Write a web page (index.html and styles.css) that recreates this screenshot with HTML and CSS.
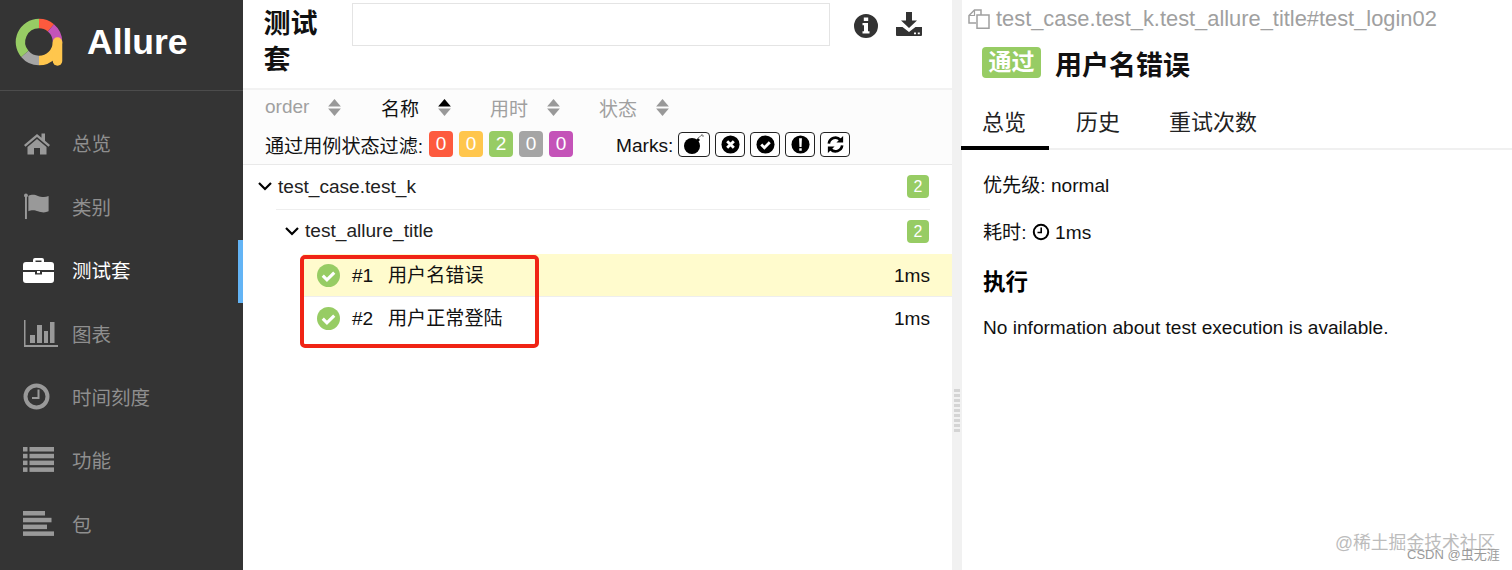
FILE: index.html
```html
<!DOCTYPE html>
<html lang="zh">
<head>
<meta charset="utf-8">
<title>Allure</title>
<link rel="stylesheet" href="styles.css">
</head>
<body>
<div class="app">
  <aside class="side">
    <div class="brand">
      <svg class="logo" viewBox="0 0 50 50">
        <g fill="none" stroke-width="9.500">
          <path stroke="#fd5a3e" d="M24 5.500A18.500 18.500 0 0 1 35.900 9.800"/>
          <path stroke="#c453b8" d="M35.900 9.800A18.500 18.500 0 0 1 42.500 24"/>
          <path stroke="#ffc64d" d="M42.500 24A18.500 18.500 0 0 1 24 42.500"/>
          <path stroke="#a5a5a5" d="M24 42.500A18.500 18.500 0 0 1 9.800 35.900"/>
          <path stroke="#97cc64" d="M9.800 35.900A18.500 18.500 0 0 1 24 5.500"/>
          <path stroke="#ffc64d" stroke-linecap="round" d="M42.500 24V43"/>
        </g>
      </svg>
      <span class="brand-name">Allure</span>
    </div>
    <nav class="nav">
      <a class="nav-item"><span class="nav-ico"><svg width="28" height="24" viewBox="0 0 28 24"><path d="M14 3 1 14l1.500 1.800L14 6l11.500 9.800L27 14l-5-4.300V2.500h-3.500v4.200z"/><path d="M14 8 4.500 16v7.500H11V17h6v6.500h6.500V16z"/></svg></span>总览</a>
      <a class="nav-item"><span class="nav-ico"><svg width="30" height="27" viewBox="0 0 30 28"><circle cx="2.500" cy="2.500" r="2"/><rect x="1.500" y="3" width="2" height="24"/><path d="M5 3c4-2 7-1 10 0s7 2 11 0v16c-4 2-8 1-11 0s-6-2-10 0z" /></svg></span>类别</a>
      <a class="nav-item active"><span class="nav-ico"><svg width="31" height="26" viewBox="0 0 31 26"><path d="M10 5V3a2 2 0 0 1 2-2h7a2 2 0 0 1 2 2v2h7a3 3 0 0 1 3 3v5H0V8a3 3 0 0 1 3-3zm2.500 0h6V3.500h-6z"/><path d="M0 15h12v2.500h7V15h12v8a3 3 0 0 1-3 3H3a3 3 0 0 1-3-3z"/><rect x="14" y="14" width="3" height="2.200"/></svg></span>测试套</a>
      <a class="nav-item"><span class="nav-ico"><svg width="35" height="27" viewBox="0 0 35 27"><path d="M1 0h1.500v25H35v2H1z"/><rect x="7" y="15" width="5" height="8"/><rect x="14" y="5" width="5" height="18"/><rect x="21" y="11" width="4" height="12"/><rect x="27" y="2" width="4.500" height="21"/></svg></span>图表</a>
      <a class="nav-item"><span class="nav-ico"><svg width="28" height="28" viewBox="0 0 28 28"><circle cx="13.500" cy="13.500" r="11" fill="none" stroke="#999" stroke-width="4"/><path d="M14.500 6.500h2v9.500H9v-2h5.500z"/></svg></span>时间刻度</a>
      <a class="nav-item"><span class="nav-ico"><svg width="31" height="25" viewBox="0 0 31 25"><rect y="0" width="4.500" height="4.500"/><rect x="6.500" y="0" width="24.500" height="4.500"/><rect y="6.800" width="4.500" height="4.500"/><rect x="6.500" y="6.800" width="24.500" height="4.500"/><rect y="13.600" width="4.500" height="4.500"/><rect x="6.500" y="13.600" width="24.500" height="4.500"/><rect y="20.400" width="4.500" height="4.500"/><rect x="6.500" y="20.400" width="24.500" height="4.500"/></svg></span>功能</a>
      <a class="nav-item"><span class="nav-ico"><svg width="31" height="25" viewBox="0 0 31 25"><rect y="0" width="22" height="4.500"/><rect y="6.800" width="28.500" height="4.500"/><rect y="13.600" width="24" height="4.500"/><rect y="20.400" width="31" height="4.500"/></svg></span>包</a>
    </nav>
  </aside>

  <main class="list">
    <header class="list-head">
      <h1 class="list-title">测试套</h1>
      <input class="search" type="text" aria-label="search">
      <div class="tools">
        <svg class="tool-info" viewBox="0 0 24 24"><path fill-rule="evenodd" d="M12 0a12 12 0 1 1 0 24 12 12 0 0 1 0-24zM9.800 3.500v3.500h4.400V3.500zM8.500 9v2.200h1.500v6H8.500v2.300h7v-2.300H14V9z"/></svg>
        <svg class="tool-down" viewBox="0 0 26 24"><path d="M10 0h6v8.500h5L13 16 5 8.500h5z"/><path fill-rule="evenodd" d="M0 15h6.500L13 20l6.500-5H26v8a1 1 0 0 1-1 1H1a1 1 0 0 1-1-1zm18 5.500v1.700h2v-1.700zm3.800 0v1.700h2v-1.700z"/></svg>
      </div>
    </header>
    <div class="sorters">
      <span class="sorter s-order">order<svg class="arrows" viewBox="0 0 12 16"><path d="M6 0l6 7H0z"/><path d="M0 9h12l-6 7z"/></svg></span>
      <span class="sorter s-name on">名称<svg class="arrows" viewBox="0 0 12 16"><path class="up" d="M6 0l6 7H0z"/><path d="M0 9h12l-6 7z"/></svg></span>
      <span class="sorter s-time">用时<svg class="arrows" viewBox="0 0 12 16"><path d="M6 0l6 7H0z"/><path d="M0 9h12l-6 7z"/></svg></span>
      <span class="sorter s-stat">状态<svg class="arrows" viewBox="0 0 12 16"><path d="M6 0l6 7H0z"/><path d="M0 9h12l-6 7z"/></svg></span>
    </div>
    <div class="filters">
      <span class="filter-label">通过用例状态过滤:</span>
      <span class="chips">
        <span class="chip red">0</span><span class="chip yellow">0</span><span class="chip green">2</span><span class="chip gray">0</span><span class="chip purple">0</span>
      </span>
      <span class="marks-label">Marks:</span>
      <span class="marks">
        <span class="mark wide"><svg viewBox="0 0 24 20"><circle cx="10" cy="12" r="8"/><path d="M14 6l2-2 2 2-2 2z"/><path d="M16 4l4-3M19 1h2v2" fill="none" stroke="#777" stroke-width="1"/></svg></span>
        <span class="mark"><svg viewBox="0 0 20 20"><circle cx="10" cy="10" r="9.500"/><path d="M6.500 6.500l7 7M13.500 6.500l-7 7" stroke="#fff" stroke-width="3"/></svg></span>
        <span class="mark"><svg viewBox="0 0 20 20"><circle cx="10" cy="10" r="9.500"/><path d="M5.500 10l3.300 3.300 5.700-5.700" fill="none" stroke="#fff" stroke-width="3"/></svg></span>
        <span class="mark"><svg viewBox="0 0 20 20"><circle cx="10" cy="10" r="9.500"/><path d="M8.500 3.500h3l-.4 9H8.900zM8.700 14h2.600v2.600H8.700z" fill="#fff"/></svg></span>
        <span class="mark"><svg viewBox="0 0 20 20"><path d="M3 9a7 7 0 0 1 12-4" fill="none" stroke="#000" stroke-width="2.800"/><path d="M18 1v7h-7z"/><path d="M17 11a7 7 0 0 1-12 4" fill="none" stroke="#000" stroke-width="2.800"/><path d="M2 19v-7h7z"/></svg></span>
      </span>
    </div>
    <div class="tree">
      <div class="group">
        <svg class="chev" viewBox="0 0 14 9"><path d="M1 1l6 6 6-6" fill="none" stroke="#000" stroke-width="2.200"/></svg>
        <span class="group-name">test_case.test_k</span>
        <span class="count">2</span>
      </div>
      <div class="group sub">
        <svg class="chev" viewBox="0 0 14 9"><path d="M1 1l6 6 6-6" fill="none" stroke="#000" stroke-width="2.200"/></svg>
        <span class="group-name">test_allure_title</span>
        <span class="count">2</span>
      </div>
      <div class="case selected">
        <svg class="ok" viewBox="0 0 22 22"><circle cx="11" cy="11" r="11"/><path d="M5.500 11.200l4 4 7-7" fill="none" stroke="#fff" stroke-width="3"/></svg>
        <span class="case-num">#1</span><span class="case-name">用户名错误</span>
        <span class="case-time">1ms</span>
      </div>
      <div class="case">
        <svg class="ok" viewBox="0 0 22 22"><circle cx="11" cy="11" r="11"/><path d="M5.500 11.200l4 4 7-7" fill="none" stroke="#fff" stroke-width="3"/></svg>
        <span class="case-num">#2</span><span class="case-name">用户正常登陆</span>
        <span class="case-time">1ms</span>
      </div>
      <div class="redbox"></div>
    </div>
  </main>

  <div class="split"><span class="grip"></span></div>

  <section class="detail">
    <div class="path">
      <svg class="copy" viewBox="0 0 22 20"><path d="M8 14H1V6.500L6.500 1H13v5" fill="none" stroke="#a0a0a0" stroke-width="1.500"/><path d="M1 6.500h5.500V1" fill="none" stroke="#a0a0a0" stroke-width="1.200"/><path d="M9 6h12v13.200H9z" fill="none" stroke="#a0a0a0" stroke-width="1.500"/></svg>
      <span>test_case.test_k.test_allure_title#test_login02</span>
    </div>
    <div class="status-line">
      <span class="pass-tag">通过</span>
      <h2 class="case-title">用户名错误</h2>
    </div>
    <div class="tabs">
      <span class="tab current">总览</span>
      <span class="tab t2">历史</span>
      <span class="tab t3">重试次数</span>
    </div>
    <div class="body">
      <p class="meta">优先级: normal</p>
      <p class="meta">耗时: <svg class="clock" viewBox="0 0 18 18"><circle cx="9" cy="9" r="7.200" fill="none" stroke="#000" stroke-width="2"/><path d="M9.200 4.500v5H5.500" fill="none" stroke="#000" stroke-width="1.600"/></svg> 1ms</p>
      <h3 class="exec">执行</h3>
      <p class="meta last">No information about test execution is available.</p>
    </div>
  </section>
</div>
<div class="mark-juejin">@稀土掘金技术社区</div>
<div class="mark-csdn">CSDN @虫无涯</div>
</body>
</html>
```

FILE: styles.css
```css
* { box-sizing: border-box; }
html, body { margin: 0; height: 570px; overflow: hidden; }
body {
  position: relative;
  background: #fff;
  color: #111;
  font-family: "Liberation Sans", "Noto Sans CJK SC", sans-serif;
  font-size: 19.100px;
}
.app { display: flex; height: 570px; }

/* sidebar */
.side { flex: 0 0 243px; background: #343434; color: #999; }
.brand {
  display: flex; align-items: center; height: 91px;
  padding: 0 0 0 14.500px; border-bottom: 1px solid #4c4c4c;
}
.logo { width: 50px; height: 50px; margin-top: -5px; }
.brand-name { margin: -5px 0 0 22.500px; color: #fff; font-size: 35.500px; font-weight: 700; }
.nav { display: flex; flex-direction: column; padding-top: 22px; }
.nav-item {
  display: flex; align-items: center; height: 63.400px;
  padding: 0 0 3.500px 23px; font-size: 19.500px; color: #8f8f8f;
}
.nav-ico { flex: 0 0 49px; display: flex; align-items: center; }
.nav-ico svg { fill: #999; }
.nav-item.active { color: #fff; border-right: 5px solid #63b4f5; }
.nav-item.active svg { fill: #fff; }

/* list column */
.list { flex: 0 0 709px; display: flex; flex-direction: column; background: #fff; }
.list-head {
  display: flex; align-items: flex-start; height: 90px;
  padding: 3px 0 0 20.500px; border-bottom: 2px solid #f2f2f2;
}
.list-title {
  flex: 0 0 54px; margin: 3px 34px 0 0; font-size: 27px; line-height: 36px;
  font-weight: 700; color: #111;
}
.search {
  flex: 0 0 478px; height: 43px; margin: 0;
  border: 1px solid #e4e4e4; background: #fff;
}
.tools { display: flex; gap: 18px; padding: 9px 0 0 24px; }
.tool-info { width: 24px; height: 24px; margin-top: 2px; fill: #333; }
.tool-down { width: 26px; height: 24px; fill: #333; }

.sorters {
  display: flex; height: 36px; align-items: center;
  padding: 0 0 2px 22px; background: #fcfcfc; color: #a0a0a0; font-size: 19px;
}
.sorter { display: flex; align-items: center; }
.s-order { width: 116px; }
.s-name { width: 109px; }
.s-time { width: 109px; }
.arrows { width: 13px; height: 17px; margin-left: 18.500px; fill: #999; }
.on { color: #111; }
.up { fill: #000; }

.filters {
  display: flex; align-items: center; height: 39px;
  padding: 0 0 2px 22px; background: #fcfcfc; border-bottom: 1px solid #e9e9e9;
}
.filter-label { width: 164px; margin-top: 1px; }
.chips { display: flex; gap: 6px; width: 187px; }
.chip {
  width: 24px; height: 26px; line-height: 26px; text-align: center;
  border-radius: 4px; color: #fff; font-size: 19px;
}
.red { background: #fd5a3e; }
.yellow { background: #ffc64d; }
.green { background: #97cc64; }
.gray { background: #a5a5a5; }
.purple { background: #c453b8; }
.marks-label { width: 62px; margin-top: 3px; }
.marks { display: flex; gap: 5px; }
.mark {
  display: flex; align-items: center; justify-content: center;
  width: 30px; height: 25px; border: 1px solid #222; border-radius: 4px; background: #fff;
}
.mark.wide { width: 32px; }
.mark svg { width: 19px; height: 19px; }
.mark.wide svg { width: 24px; height: 20px; }

/* tree */
.tree { position: relative; flex: 1; }
.group {
  display: flex; align-items: center; height: 45px; padding: 0 23px 2px 15px;
  color: #222; position: relative;
}
.group.sub { height: 44px; padding-left: 42px; }
.group:first-child::after {
  content: ""; position: absolute; left: 33px; right: 22px; bottom: 0;
  border-bottom: 1px solid #eee;
}
.chev { width: 14px; height: 9px; margin-right: 6px; }
.group-name { flex: 1; }
.count {
  width: 22px; height: 23px; line-height: 23px; text-align: center;
  border-radius: 4px; background: #97cc64; color: #fff; font-size: 16px;
}
.case {
  display: flex; align-items: center; height: 43px; padding: 0 22px 0 14px;
  margin-left: 60px;
}
.selected { background: #fffbcd; border-bottom: 1px solid #eee; }
.ok { width: 23px; height: 23px; fill: #97cc64; margin: 0 12px 0 0; }
.case-num { width: 36px; margin-top: 1px; }
.case-name { flex: 1; margin-top: -3px; }
.case-time { margin-top: 1px; }
.redbox {
  position: absolute; left: 57px; top: 90px; width: 239px; height: 93px;
  border: 4px solid #f02415; border-radius: 5px;
}

/* splitter */
.split {
  flex: 0 0 10px; display: flex; align-items: center; justify-content: center;
  background: #f1f1f1;
}
.grip {
  width: 6px; height: 43px; margin-top: 250px;
  background: repeating-linear-gradient(to bottom, #d4d4d4 0 3px, #f1f1f1 3px 5px);
}

/* detail */
.detail { flex: 1; min-width: 0; padding-top: 3px; }
.path {
  display: flex; align-items: center; height: 32px; padding-left: 6px;
  color: #a0a0a0; font-size: 21.850px;
}
.copy { width: 22px; height: 20px; margin-right: 6px; flex: none; }
.status-line { display: flex; align-items: center; height: 48px; padding: 7px 0 0 20px; }
.pass-tag {
  width: 59px; height: 31px; line-height: 30px; text-align: center;
  border-radius: 4px; background: #97cc64; color: #fff;
  font-size: 23px; font-weight: 700; margin-right: 14px;
}
.case-title { margin: 2px 0 0; font-size: 27px; font-weight: 700; color: #111; }
.tabs {
  display: flex; height: 42px; margin-top: 25px; font-size: 22px; line-height: 29px;
  border-bottom: 2px solid #f0f0f0; color: #222;
}
.tab { height: 42px; }
.current { border-bottom: 4px solid #000; width: 88px; padding-left: 21px; margin-left: -1px; }
.t2 { padding: 0 5px 0 27px; width: 76px; }
.t3 { padding-left: 44px; }
.body { padding: 0 21px; }
.meta { margin: 0; padding-top: 24px; height: 47px; line-height: 23px; color: #111; }
.clock { width: 18px; height: 18px; vertical-align: -2px; }
.exec { margin: 0; padding-top: 24px; height: 60px; font-size: 22.500px; line-height: 30px; font-weight: 700; color: #000; }
.last { padding-top: 12px; }

/* watermarks */
.mark-juejin {
  position: absolute; left: 1335px; top: 532px;
  font-size: 17.800px; line-height: 22px; color: #bcbcbc;
}
.mark-csdn {
  position: absolute; left: 1407px; top: 546px;
  font-size: 13px; line-height: 18px; color: #9a9a9a;
}
```
